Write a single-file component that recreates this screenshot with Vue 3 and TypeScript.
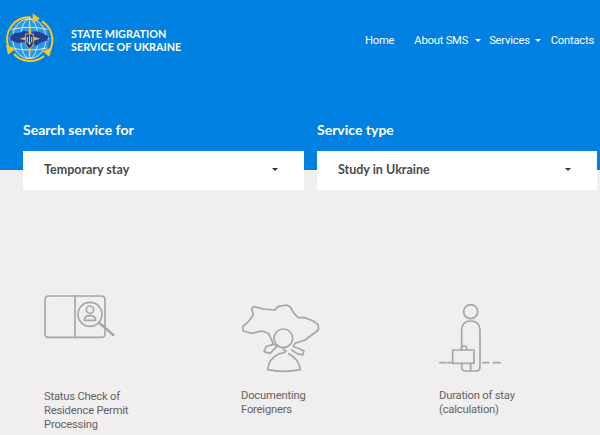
<script setup lang="ts">
interface Service {
  title: string;
  lines: string[];
}

const services: Service[] = [
  { title: "status", lines: ["Status Check of", "Residence Permit", "Processing"] },
  { title: "documenting", lines: ["Documenting", "Foreigners"] },
  { title: "duration", lines: ["Duration of stay", "(calculation)"] },
];
</script>

<template>
  <div class="page">
    <section class="hero">
      <header class="topbar">
        <svg class="logo" viewBox="0 0 180 180" width="60" height="60" aria-hidden="true">
          <circle cx="88" cy="86" r="60" fill="#2a96e4" />
          <g fill="none" stroke="#cfe8f8" stroke-width="3">
            <ellipse cx="88" cy="86" rx="26" ry="60" />
            <ellipse cx="88" cy="86" rx="50" ry="60" />
            <path d="M34 58q54 -12 108 0M34 114q54 12 108 0M28 86h120M88 26v120" />
          </g>
          <path d="M32 78l10 -8 16 -2 12 -6 20 4 22 -2 20 8 14 8 -6 12 -20 6 -10 10 -14 -8 -22 -4 -20 4 -14 -6 -10 -6z" fill="#24409a" />
          <path d="M90 36l5 42 26 8 -26 8 -5 50 -5 -50 -26 -8 26 -8z" fill="#e8c02e" />
          <path d="M77 72h23v28q0 10 -11.500 16q-11.500 -6 -11.500 -16z" fill="#1d3c86" stroke="#d8b030" stroke-width="3" />
          <path d="M88.500 76v28M82 81v15l6.500 6 6.500 -6v-15" fill="none" stroke="#f2d04a" stroke-width="3" />
          <g fill="none" stroke="#f4ca22" stroke-width="6">
            <path d="M26 112a66 66 0 0 1 66 -90" />
            <path d="M126 34a66 66 0 0 1 24 86" />
            <path d="M132 138a66 66 0 0 1 -90 -6" />
          </g>
          <g fill="#f4ca22">
            <path d="M98 10l22 16 -22 12z" />
            <path d="M156 112l-8 28 -20 -16z" />
            <path d="M18 104l28 12 -22 18z" />
          </g>
        </svg>
        <div class="brand">STATE MIGRATION<br />SERVICE OF UKRAINE</div>
        <nav class="nav">
          <a class="nav-home">Home</a>
          <a class="nav-about">About SMS<i class="caret caret-light"></i></a>
          <a class="nav-services">Services<i class="caret caret-light"></i></a>
          <a>Contacts</a>
        </nav>
      </header>

      <div class="filters">
        <div class="filter">
          <label class="filter-label">Search service for</label>
          <div class="select">
            <span>Temporary stay</span>
            <i class="caret"></i>
          </div>
        </div>
        <div class="filter">
          <label class="filter-label">Service type</label>
          <div class="select">
            <span>Study in Ukraine</span>
            <i class="caret"></i>
          </div>
        </div>
      </div>
    </section>

    <main class="services">
      <article v-for="service in services" :key="service.title" class="service" :class="service.title">
        <svg
          v-if="service.title === 'status'"
          class="icon"
          viewBox="0 0 330 210"
          width="110"
          height="70"
          aria-hidden="true"
        >
          <path d="M205 33H56q-11 0 -11 11v102q0 11 11 11h158q11 0 11 -11V44q0 -11 -11 -11z" />
          <path d="M135 33v124" />
          <circle cx="180" cy="88" r="36" />
          <circle cx="180" cy="74" r="11" />
          <path d="M163 106q0 -14 17 -14t17 14z" />
          <path d="M207 113l43 37" class="thick" />
        </svg>
        <svg
          v-else-if="service.title === 'documenting'"
          class="icon"
          viewBox="0 0 300 255"
          width="100"
          height="85"
          aria-hidden="true"
        >
          <path
            d="M142 152L130 148L125 135L115 115L95 108L65 115L40 108L38 95L55 80L70 60L65 40L72 35L100 42L135 45L143 35L170 30L180 35L192 55L205 68L225 68L250 78L265 90L265 105L245 120L225 135L195 145L190 155L205 160L222 168L218 180L200 175L185 165"
          />
          <path d="M130 148L108 155L102 170L120 175L135 160L142 152" />
          <circle cx="160" cy="130" r="28" />
          <path d="M160 158q-2 6 8 10q-4 6 -20 8q-32 14 -35 48q46 10 98 0q-4 -32 -35 -48" />
        </svg>
        <svg v-else class="icon" viewBox="0 0 240 255" width="80" height="85" aria-hidden="true">
          <circle cx="122" cy="50" r="21" />
          <path d="M95 165v-62q2 -25 27 -25t28 25v112q0 13 -13 13h-30q-12 0 -12 -13v-10" />
          <path d="M122 205v23" />
          <path d="M68 165h64v40H68z" />
          <path d="M94 165v-6q0 -6 6 -6h4q6 0 6 6v6" />
          <path d="M30 203h18M54 203h12M158 203h18M190 203h20" />
        </svg>
        <p class="service-title">
          <span v-for="line in service.lines" :key="line">{{ line }}</span>
        </p>
      </article>
    </main>
  </div>
</template>

<style>
html,
body {
  margin: 0;
  background: #f0eeef;
}
</style>

<style scoped>
.page {
  width: 600px;
  height: 435px;
  overflow: hidden;
  background: #f0eeef;
  font-family: Lato, "Open Sans", sans-serif;
}

.hero {
  height: 170px;
  background: #0080e0;
}

.topbar {
  display: flex;
  align-items: center;
  height: 60px;
  padding-top: 10px;
  color: #fff;
}

.logo {
  flex: none;
}

.brand {
  margin-left: 11px;
  font-size: 10.8px;
  font-weight: 700;
  line-height: 13px;
  white-space: nowrap;
}

.nav {
  display: flex;
  margin-left: auto;
  padding-right: 6px;
  font-family: Roboto, sans-serif;
  font-size: 11.2px;
  letter-spacing: -0.2px;
}

.nav a {
  display: flex;
  align-items: center;
  white-space: nowrap;
}

.nav-home {
  margin-right: 20px;
}

.nav-about .caret {
  margin-left: 7px;
}

.nav-services .caret {
  margin-left: 5px;
}

.nav-about {
  margin-right: 8px;
}

.nav-services {
  margin-right: 10px;
}

.caret {
  display: inline-block;
  width: 0;
  height: 0;
  border-left: 3px solid transparent;
  border-right: 3px solid transparent;
  border-top: 3px solid #333;
}

.caret-light {
  border-top-color: #fff;
}

.filters {
  display: grid;
  grid-template-columns: 281px 280px;
  column-gap: 13px;
  padding: 51px 0 0 23px;
}

.filter-label {
  display: block;
  margin-bottom: 12px;
  color: #fff;
  font-size: 14px;
  font-weight: 700;
  line-height: 18px;
}

.select {
  display: flex;
  align-items: center;
  justify-content: space-between;
  box-sizing: border-box;
  height: 39px;
  padding: 0 26px 2px 21px;
  background: #fff;
  color: #4a4a4a;
  font-size: 12.5px;
  font-weight: 700;
}

.services {
  display: grid;
  grid-template-columns: 197px 198px 161px;
  padding: 115px 0 0 44px;
}

.service {
  display: flex;
  flex-direction: column;
}

.icon {
  display: block;
  margin-left: -14px;
  fill: none;
  stroke: #a6a6a6;
  stroke-width: 5;
  stroke-linecap: round;
  stroke-linejoin: round;
}

.icon .thick {
  stroke-width: 7;
}

.status .icon {
  margin-bottom: 35px;
}

.documenting .icon,
.duration .icon {
  margin-top: 10px;
  margin-bottom: 9px;
}

.documenting .icon {
  margin-left: -11px;
}

.duration .icon {
  margin-left: -9px;
}

.service-title {
  display: flex;
  flex-direction: column;
  margin: 0;
  color: #636363;
  font-family: Roboto, sans-serif;
  font-size: 11.2px;
  letter-spacing: -0.18px;
  line-height: 13.8px;
}
</style>
